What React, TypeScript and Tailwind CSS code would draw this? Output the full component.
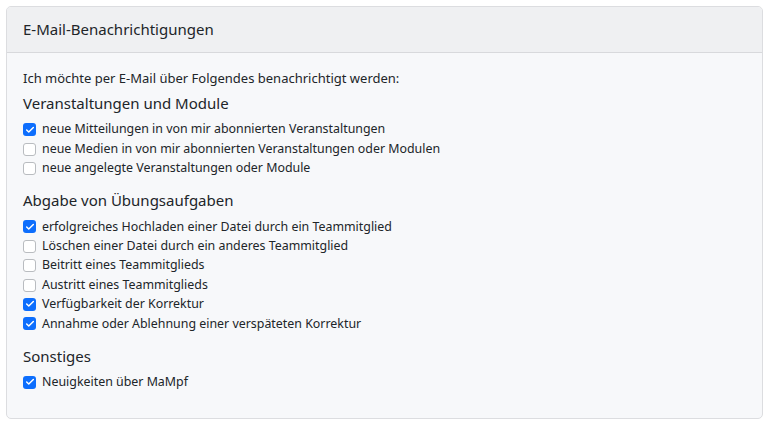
import { Check } from "lucide-react";

type Item = { label: string; checked: boolean };

const sections: { title: string; items: Item[] }[] = [
  {
    title: "Veranstaltungen und Module",
    items: [
      { label: "neue Mitteilungen in von mir abonnierten Veranstaltungen", checked: true },
      { label: "neue Medien in von mir abonnierten Veranstaltungen oder Modulen", checked: false },
      { label: "neue angelegte Veranstaltungen oder Module", checked: false },
    ],
  },
  {
    title: "Abgabe von Übungsaufgaben",
    items: [
      { label: "erfolgreiches Hochladen einer Datei durch ein Teammitglied", checked: true },
      { label: "Löschen einer Datei durch ein anderes Teammitglied", checked: false },
      { label: "Beitritt eines Teammitglieds", checked: false },
      { label: "Austritt eines Teammitglieds", checked: false },
      { label: "Verfügbarkeit der Korrektur", checked: true },
      { label: "Annahme oder Ablehnung einer verspäteten Korrektur", checked: true },
    ],
  },
  {
    title: "Sonstiges",
    items: [{ label: "Neuigkeiten über MaMpf", checked: true }],
  },
];

function Checkbox({ checked }: { checked: boolean }) {
  return checked ? (
    <span className="flex h-[13px] w-[13px] shrink-0 items-center justify-center rounded-[3px] bg-[#0d6efd]">
      <Check size={10} strokeWidth={3.5} className="text-white" />
    </span>
  ) : (
    <span className="h-[13px] w-[13px] shrink-0 rounded-[3px] border border-[#b9bcc0] bg-white" />
  );
}

export default function App() {
  return (
    <div className="p-[6px] font-['Noto_Sans',sans-serif] text-[#212529]">
      <div className="w-[757px] overflow-hidden rounded-[5px] border border-[#dcdde0] bg-[#f7f8fa]">
        <div className="flex h-[46px] items-center border-b border-[#d8d9dc] bg-[#eff0f2] px-4 text-[15px]">
          E-Mail-Benachrichtigungen
        </div>
        <div className="px-4 pb-[26px] pt-[15px]">
          <p className="text-[13px] leading-[20px]">
            Ich möchte per E-Mail über Folgendes benachrichtigt werden:
          </p>
          {sections.map((s, i) => (
            <div key={s.title} className={i === 0 ? "mt-[4px]" : "mt-[11px]"}>
              <h5 className="mb-[6px] text-[15px] leading-[22px]">{s.title}</h5>
              {s.items.map((it) => (
                <label key={it.label} className="flex h-[19.4px] items-center gap-[6px] text-[12.4px]">
                  <Checkbox checked={it.checked} />
                  <span>{it.label}</span>
                </label>
              ))}
            </div>
          ))}
        </div>
      </div>
    </div>
  );
}
